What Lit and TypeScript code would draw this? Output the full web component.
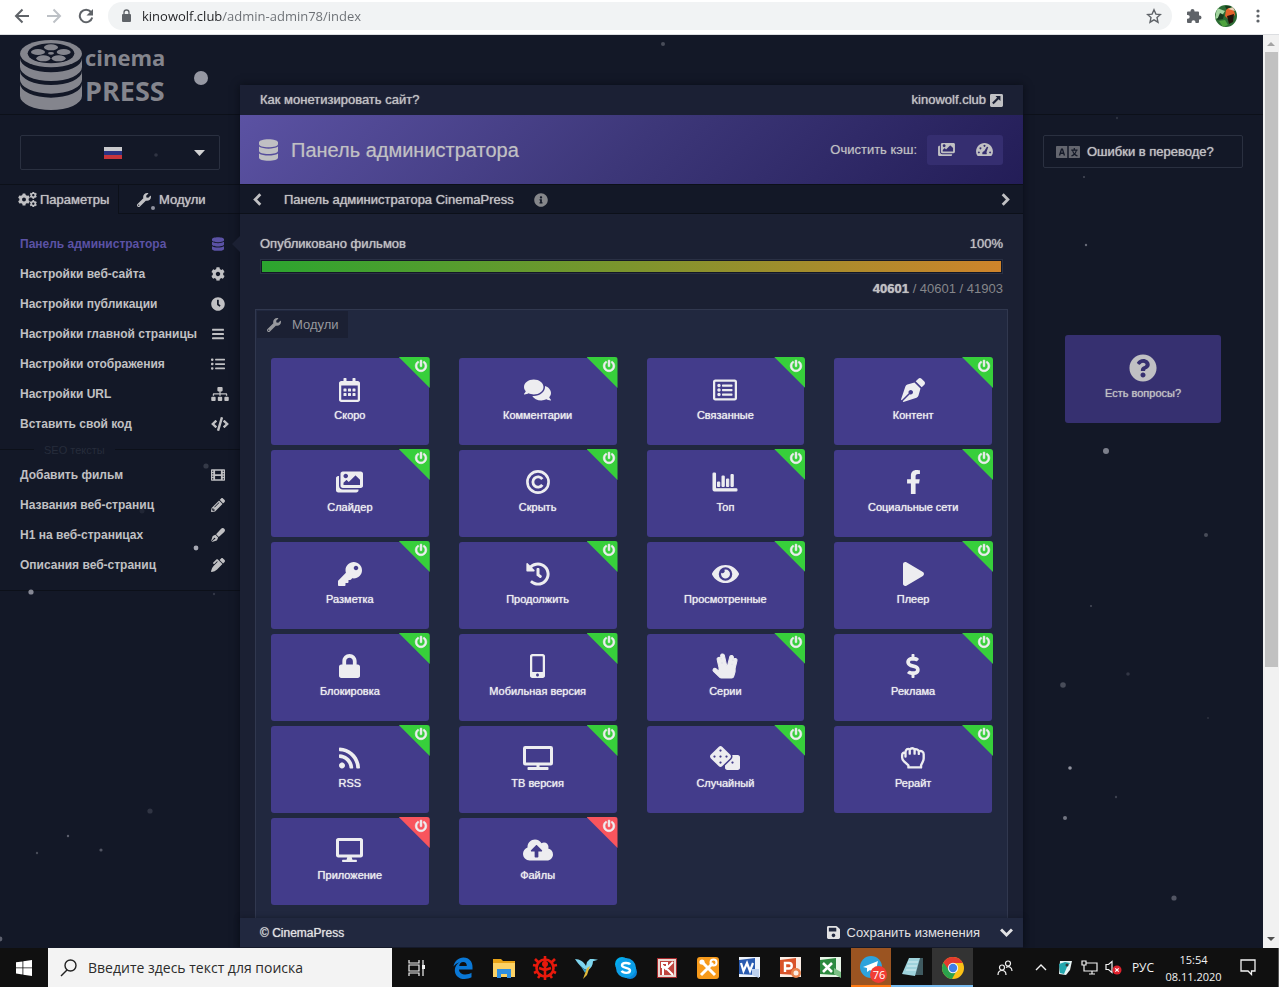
import { LitElement, html, css, svg, nothing } from "lit";
import { customElement, property } from "lit/decorators.js";

const COG =
  "M487.4 315.7l-42.6-24.6c4.3-23.2 4.3-47 0-70.2l42.6-24.6c4.9-2.8 7.1-8.6 5.5-14-11.1-35.6-30-67.8-54.7-94.6-3.8-4.1-10-5.1-14.8-2.3L380.8 110c-17.9-15.4-38.5-27.3-60.8-35.1V25.8c0-5.6-3.9-10.5-9.4-11.7-36.7-8.2-74.3-7.8-109.2 0-5.5 1.2-9.4 6.1-9.4 11.7V75c-22.2 7.9-42.8 19.8-60.8 35.1L88.7 85.5c-4.9-2.8-11-1.9-14.8 2.3-24.7 26.7-43.6 58.9-54.7 94.6-1.7 5.4.6 11.2 5.5 14L67.3 221c-4.3 23.2-4.3 47 0 70.2l-42.6 24.6c-4.9 2.8-7.1 8.6-5.5 14 11.1 35.6 30 67.8 54.7 94.6 3.8 4.1 10 5.1 14.8 2.3l42.6-24.6c17.9 15.4 38.5 27.3 60.8 35.1v49.2c0 5.6 3.9 10.5 9.4 11.7 36.7 8.2 74.3 7.8 109.2 0 5.5-1.2 9.4-6.1 9.4-11.7v-49.2c22.2-7.9 42.8-19.8 60.8-35.1l42.6 24.6c4.9 2.8 11 1.9 14.8-2.3 24.7-26.7 43.6-58.9 54.7-94.6 1.5-5.5-.7-11.3-5.6-14.1zM256 336c-44.1 0-80-35.9-80-80s35.9-80 80-80 80 35.9 80 80-35.9 80-80 80z";

const p = (d: string) => svg`<path fill-rule="evenodd" d=${d}></path>`;
const bold = (d: string) => svg`<path fill-rule="evenodd" stroke="currentColor" stroke-width="22" d=${d}></path>`;

/* name -> [viewBox width, shapes]; every icon is 512 units high */
const ICONS: Record<string, [number, unknown]> = {
  database: [448, p("M448 73.143v45.714C448 159.143 347.667 192 224 192S0 159.143 0 118.857V73.143C0 32.857 100.333 0 224 0s224 32.857 224 73.143zM448 176v102.857C448 319.143 347.667 352 224 352S0 319.143 0 278.857V176c48.125 33.143 136.208 48.572 224 48.572S399.874 209.143 448 176zm0 160v102.857C448 479.143 347.667 512 224 512S0 479.143 0 438.857V336c48.125 33.143 136.208 48.572 224 48.572S399.874 369.143 448 336z")],
  cog: [512, p(COG)],
  cogs: [640, svg`<g transform="translate(-12 44) scale(.83)">${p(COG)}</g><g transform="translate(390 -16) scale(.5)">${p(COG)}</g><g transform="translate(390 272) scale(.5)">${p(COG)}</g>`],
  wrench: [512, p("M507.73 109.1c-2.24-9.03-13.54-12.09-20.12-5.51l-74.36 74.36-67.88-11.31-11.31-67.88 74.36-74.36c6.62-6.62 3.43-17.9-5.66-20.16-47.38-11.74-99.55.91-136.58 37.93-39.64 39.64-50.55 97.1-34.05 147.2L18.74 402.76c-24.99 24.99-24.99 65.51 0 90.5 24.99 24.99 65.51 24.99 90.5 0l213.21-213.21c50.12 16.71 107.47 5.68 147.37-34.22 37.07-37.07 49.7-89.32 37.91-136.73zM64 472c-13.25 0-24-10.75-24-24 0-13.26 10.75-24 24-24s24 10.74 24 24c0 13.25-10.75 24-24 24z")],
  clock: [512, p("M256 8C119 8 8 119 8 256s111 248 248 248 248-111 248-248S393 8 256 8zm88 313l-20 25a16 16 0 0 1-22 3l-67-50a40 40 0 0 1-15-31V112a16 16 0 0 1 16-16h32a16 16 0 0 1 16 16v144l58 43a16 16 0 0 1 2 22z")],
  bars: [448, svg`<rect y="60" width="448" height="72" rx="16"></rect><rect y="220" width="448" height="72" rx="16"></rect><rect y="380" width="448" height="72" rx="16"></rect>`],
  list: [512, svg`<rect y="52" width="90" height="90" rx="30"></rect><rect y="212" width="90" height="90" rx="30"></rect><rect y="372" width="90" height="90" rx="30"></rect><rect x="150" y="64" width="362" height="64" rx="16"></rect><rect x="150" y="224" width="362" height="64" rx="16"></rect><rect x="150" y="384" width="362" height="64" rx="16"></rect>`],
  sitemap: [640, p("M128 352H32c-17.67 0-32 14.33-32 32v96c0 17.67 14.33 32 32 32h96c17.67 0 32-14.33 32-32v-96c0-17.67-14.33-32-32-32zm-24-80h192v48h48v-48h192v48h48v-57.59c0-21.17-17.23-38.41-38.41-38.41H344v-64h40c17.67 0 32-14.33 32-32V32c0-17.67-14.33-32-32-32H256c-17.67 0-32 14.33-32 32v96c0 17.67 14.33 32 32 32h40v64H94.41C73.23 224 56 241.23 56 262.41V320h48v-48zm264 80h-96c-17.67 0-32 14.33-32 32v96c0 17.67 14.33 32 32 32h96c17.67 0 32-14.33 32-32v-96c0-17.67-14.33-32-32-32zm240 0h-96c-17.67 0-32 14.33-32 32v96c0 17.67 14.33 32 32 32h96c17.67 0 32-14.33 32-32v-96c0-17.67-14.33-32-32-32z")],
  code: [640, p("M278.9 511.5l-61-17.7c-6.4-1.8-10-8.5-8.2-14.9L346.2 8.7c1.8-6.4 8.5-10 14.9-8.2l61 17.7c6.4 1.8 10 8.5 8.2 14.9L293.8 503.3c-1.9 6.4-8.5 10.1-14.9 8.2zm-114-112.2l43.5-46.4c4.6-4.9 4.3-12.7-.8-17.2L117 256l90.6-79.7c5.1-4.5 5.5-12.3.8-17.2l-43.5-46.4c-4.5-4.8-12.1-5.1-17-.5L3.8 247.2c-5.1 4.7-5.1 12.8 0 17.5l144.1 135.1c4.9 4.6 12.5 4.4 17-.5zm327.2.6l144.1-135.1c5.1-4.7 5.1-12.8 0-17.5L492.1 112.1c-4.8-4.5-12.4-4.3-17 .5L431.6 159c-4.6 4.9-4.3 12.7.8 17.2L523 256l-90.6 79.7c-5.1 4.5-5.5 12.3-.8 17.2l43.5 46.4c4.5 4.9 12.1 5.1 17 .6z")],
  film: [512, p("M24 48H488a24 24 0 0 1 24 24V440a24 24 0 0 1-24 24H24a24 24 0 0 1-24-24V72A24 24 0 0 1 24 48zM40 96v44h44v-44zM40 188v44h44v-44zM40 280v44h44v-44zM40 372v44h44v-44zM428 96v44h44v-44zM428 188v44h44v-44zM428 280v44h44v-44zM428 372v44h44v-44zM150 100v124h212V100zM150 288v124h212V288z")],
  pencil: [512, p("M497.9 142.1l-46.1 46.1c-4.7 4.7-12.3 4.7-17 0l-111-111c-4.7-4.7-4.7-12.3 0-17l46.1-46.1c18.7-18.7 49.1-18.7 67.9 0l60.1 60.1c18.8 18.7 18.8 49.1 0 67.9zM284.2 99.8L21.6 362.4.4 483.9c-2.9 16.4 11.4 30.6 27.8 27.8l121.5-21.3 262.6-262.6c4.7-4.7 4.7-12.3 0-17l-111-111c-4.8-4.7-12.4-4.7-17.1 0zM124.1 339.9c-5.5-5.5-5.5-14.3 0-19.8l154-154c5.5-5.5 14.3-5.5 19.8 0s5.5 14.3 0 19.8l-154 154c-5.5 5.5-14.3 5.5-19.8 0zM88 424h48v36.3l-64.5 11.3-31.1-31.1L51.7 376H88v48z")],
  penFancy: [512, p("M79.18 282.94a32.005 32.005 0 0 0-20.24 20.24L0 480l4.69 4.69 92.89-92.89c-.66-2.56-1.57-5.03-1.57-7.8 0-17.67 14.33-32 32-32s32 14.33 32 32-14.33 32-32 32c-2.77 0-5.24-.91-7.8-1.57l-92.89 92.89L32 512l176.82-58.94a31.983 31.983 0 0 0 20.24-20.24l33.07-84.07-98.88-98.88-84.07 33.07zM369.25 28.32L186.14 227.81l97.85 97.85 199.49-183.11C568.4 67.48 443.73-55.94 369.25 28.32z")],
  penAlt: [512, p("M497.94 74.17l-60.11-60.11c-18.75-18.75-49.16-18.75-67.91 0l-56.55 56.55 128.02 128.02 56.55-56.55c18.75-18.75 18.75-49.15 0-67.91zm-246.8-20.53c-15.62-15.62-40.94-15.62-56.56 0L75.8 172.43c-6.25 6.25-6.25 16.38 0 22.62l22.63 22.63c6.25 6.25 16.38 6.25 22.63 0l101.82-101.82 22.63 22.62L93.95 290.03A327.038 327.038 0 0 0 .17 485.11l-.03.23c-1.7 15.28 11.21 28.2 26.49 26.51a327.02 327.02 0 0 0 195.34-93.8l196.79-196.79-82.77-82.77-84.85-84.85z")],
  penNib: [512, p("M136.6 138.79a64.003 64.003 0 0 0-43.31 41.35L0 460l14.69 14.69L164.8 324.58c-2.99-6.26-4.8-13.18-4.8-20.58 0-26.51 21.49-48 48-48s48 21.49 48 48-21.49 48-48 48c-7.4 0-14.32-1.81-20.58-4.8L37.31 497.31 52 512l279.86-93.29a64.003 64.003 0 0 0 41.35-43.31L416 224 288 96l-151.4 42.79zm361.34-64.62l-60.11-60.11c-18.75-18.75-49.16-18.75-67.91 0l-56.55 56.55 128.02 128.02 56.55-56.55c18.75-18.75 18.75-49.15 0-67.91z")],
  calendar: [448, p("M148 288h-40c-6.6 0-12-5.4-12-12v-40c0-6.6 5.4-12 12-12h40c6.6 0 12 5.4 12 12v40c0 6.6-5.4 12-12 12zm108-12v-40c0-6.6-5.4-12-12-12h-40c-6.6 0-12 5.4-12 12v40c0 6.6 5.4 12 12 12h40c6.6 0 12-5.4 12-12zm96 0v-40c0-6.6-5.4-12-12-12h-40c-6.6 0-12 5.4-12 12v40c0 6.6 5.4 12 12 12h40c6.6 0 12-5.4 12-12zm-96 96v-40c0-6.6-5.4-12-12-12h-40c-6.6 0-12 5.4-12 12v40c0 6.6 5.4 12 12 12h40c6.6 0 12-5.4 12-12zm-96 0v-40c0-6.6-5.4-12-12-12h-40c-6.6 0-12 5.4-12 12v40c0 6.6 5.4 12 12 12h40c6.6 0 12-5.4 12-12zm192 0v-40c0-6.6-5.4-12-12-12h-40c-6.6 0-12 5.4-12 12v40c0 6.6 5.4 12 12 12h40c6.6 0 12-5.4 12-12zm96-260v352c0 26.5-21.5 48-48 48H48c-26.5 0-48-21.5-48-48V112c0-26.5 21.5-48 48-48h48V12c0-6.6 5.4-12 12-12h40c6.6 0 12 5.4 12 12v52h128V12c0-6.6 5.4-12 12-12h40c6.6 0 12 5.4 12 12v52h48c26.5 0 48 21.5 48 48zm-48 346V160H48v298c0 3.3 2.7 6 6 6h340c3.3 0 6-2.7 6-6z")],
  comments: [576, p("M416 192c0-88.4-93.1-160-208-160S0 103.6 0 192c0 34.3 14.1 65.9 38 92-13.4 30.2-35.5 54.2-35.8 54.5-2.2 2.3-2.8 5.7-1.5 8.7S4.8 352 8 352c36.6 0 66.9-12.3 88.7-25 32.2 15.7 70.3 25 111.3 25 114.9 0 208-71.6 208-160zm122 220c23.9-26 38-57.7 38-92 0-66.9-53.5-124.2-129.3-148.1.9 6.6 1.3 13.3 1.3 20.1 0 105.9-107.7 192-240 192-10.8 0-21.3-.8-31.7-1.9C207.8 439.6 281.8 480 368 480c41 0 79.1-9.2 111.3-25 21.8 12.7 52.1 25 88.7 25 3.2 0 6.1-1.9 7.3-4.8 1.3-2.9.7-6.3-1.5-8.7-.3-.3-22.4-24.2-35.8-54.5z")],
  listAlt: [512, p("M464 32H48C21.49 32 0 53.49 0 80v352c0 26.51 21.49 48 48 48h416c26.51 0 48-21.49 48-48V80c0-26.51-21.49-48-48-48zm-6 400H54a6 6 0 0 1-6-6V86a6 6 0 0 1 6-6h404a6 6 0 0 1 6 6v340a6 6 0 0 1-6 6zm-42-92v24c0 6.627-5.373 12-12 12H204c-6.627 0-12-5.373-12-12v-24c0-6.627 5.373-12 12-12h200c6.627 0 12 5.373 12 12zm0-96v24c0 6.627-5.373 12-12 12H204c-6.627 0-12-5.373-12-12v-24c0-6.627 5.373-12 12-12h200c6.627 0 12 5.373 12 12zm0-96v24c0 6.627-5.373 12-12 12H204c-6.627 0-12-5.373-12-12v-24c0-6.627 5.373-12 12-12h200c6.627 0 12 5.373 12 12zm-252 12c0 19.882-16.118 36-36 36s-36-16.118-36-36 16.118-36 36-36 36 16.118 36 36zm0 96c0 19.882-16.118 36-36 36s-36-16.118-36-36 16.118-36 36-36 36 16.118 36 36zm0 96c0 19.882-16.118 36-36 36s-36-16.118-36-36 16.118-36 36-36 36 16.118 36 36z")],
  images: [576, p("M480 416v16c0 26.51-21.49 48-48 48H48c-26.51 0-48-21.49-48-48V176c0-26.51 21.49-48 48-48h16v208c0 44.112 35.888 80 80 80h336zm96-80V80c0-26.51-21.49-48-48-48H144c-26.51 0-48 21.49-48 48v256c0 26.51 21.49 48 48 48h384c26.51 0 48-21.49 48-48zM256 128c0 26.51-21.49 48-48 48s-48-21.49-48-48 21.49-48 48-48 48 21.49 48 48zm-96 144l55.515-55.515c4.686-4.686 12.284-4.686 16.971 0L272 256l135.515-135.515c4.686-4.686 12.284-4.686 16.971 0L512 208v112H160v-48z")],
  copyright: [512, svg`<circle cx="256" cy="256" r="226" fill="none" stroke="currentColor" stroke-width="56"></circle><path d="M348 318a110 110 0 1 1 0-124" fill="none" stroke="currentColor" stroke-width="60"></path>`],
  chart: [512, bold("M396.8 352h22.4c6.4 0 12.8-6.4 12.8-12.8V108.8c0-6.4-6.4-12.8-12.8-12.8h-22.4c-6.4 0-12.8 6.4-12.8 12.8v230.4c0 6.4 6.4 12.8 12.8 12.8zm-192 0h22.4c6.4 0 12.8-6.4 12.8-12.8V140.8c0-6.4-6.4-12.8-12.8-12.8h-22.4c-6.4 0-12.8 6.4-12.8 12.8v198.4c0 6.4 6.4 12.8 12.8 12.8zm96 0h22.4c6.4 0 12.8-6.4 12.8-12.8V204.8c0-6.4-6.4-12.8-12.8-12.8h-22.4c-6.4 0-12.8 6.4-12.8 12.8v134.4c0 6.4 6.4 12.8 12.8 12.8zM496 400H54V80c0-8.84-7.16-16-16-16H16C7.160 64 0 71.160 0 80v336c0 17.670 14.330 32 32 32h464c8.840 0 16-7.160 16-16v-16c0-8.840-7.160-16-16-16zm-387.2-48h22.4c6.4 0 12.8-6.4 12.8-12.8v-70.4c0-6.4-6.4-12.8-12.8-12.8h-22.4c-6.4 0-12.8 6.4-12.8 12.8v70.4c0 6.4 6.4 12.8 12.8 12.8z")],
  facebook: [320, p("M279.14 288l14.22-92.66h-88.91v-60.13c0-25.35 12.42-50.06 52.24-50.06h40.42V6.26S260.43 0 225.36 0c-73.22 0-121.08 44.38-121.08 124.72v70.62H22.89V288h81.39v224h100.17V288z")],
  key: [512, p("M512 176.001C512 273.203 433.202 352 336 352c-11.22 0-22.19-1.062-32.827-3.069l-24.012 27.014A23.999 23.999 0 0 1 261.223 384H224v40c0 13.255-10.745 24-24 24h-40v40c0 13.255-10.745 24-24 24H24c-13.255 0-24-10.745-24-24v-78.059c0-6.365 2.529-12.47 7.029-16.971l161.802-161.802C163.108 213.814 160 195.271 160 176 160 78.798 238.797.001 335.999 0 433.488-.001 512 78.511 512 176.001zM336 128c0 26.51 21.49 48 48 48s48-21.49 48-48-21.49-48-48-48-48 21.49-48 48z")],
  history: [512, p("M504 255.531c.253 136.64-111.18 248.372-247.82 248.468-59.015.042-113.223-20.53-155.822-54.911-11.077-8.94-11.905-25.541-1.839-35.607l11.267-11.267c8.609-8.609 22.353-9.551 31.891-1.984C173.062 425.135 212.781 440 256 440c101.705 0 184-82.311 184-184 0-101.705-82.311-184-184-184-48.814 0-93.149 18.969-126.068 49.932l50.754 50.754c10.08 10.08 2.941 27.314-11.313 27.314H24c-8.837 0-16-7.163-16-16V38.627c0-14.254 17.234-21.393 27.314-11.314l49.372 49.372C129.209 34.136 189.552 8 256 8c136.81 0 247.747 110.78 248 247.531zm-180.912 78.784l9.823-12.63c8.138-10.463 6.253-25.542-4.21-33.679L288 256.349V152c0-13.255-10.745-24-24-24h-16c-13.255 0-24 10.745-24 24v135.651l65.409 50.874c10.463 8.137 25.541 6.253 33.679-4.21z")],
  eye: [576, p("M572.52 241.4C518.29 135.59 410.93 64 288 64S57.68 135.64 3.48 241.41a32.35 32.35 0 0 0 0 29.19C57.71 376.41 165.07 448 288 448s230.32-71.64 284.52-177.41a32.35 32.35 0 0 0 0-29.19zM288 400a144 144 0 1 1 144-144 143.93 143.93 0 0 1-144 144zm0-240a95.31 95.31 0 0 0-25.31 3.79 47.85 47.85 0 0 1-66.9 66.9A95.78 95.78 0 1 0 288 160z")],
  play: [448, p("M424.4 214.7L72.4 6.6C43.8-10.3 0 6.1 0 47.9V464c0 37.5 40.7 60.1 72.4 41.3l352-208c31.4-18.5 31.5-64.1 0-82.6z")],
  lock: [448, p("M400 224h-24v-72C376 68.2 307.8 0 224 0S72 68.2 72 152v72H48c-26.5 0-48 21.5-48 48v192c0 26.5 21.5 48 48 48h352c26.5 0 48-21.5 48-48V272c0-26.5-21.5-48-48-48zm-104 0H152v-72c0-39.7 32.3-72 72-72s72 32.3 72 72v72z")],
  mobile: [320, p("M272 0H48C21.5 0 0 21.5 0 48v416c0 26.5 21.5 48 48 48h224c26.5 0 48-21.5 48-48V48c0-26.5-21.5-48-48-48zM160 480c-17.7 0-32-14.3-32-32s14.3-32 32-32 32 14.3 32 32-14.3 32-32 32zm112-108c0 6.6-5.4 12-12 12H60c-6.6 0-12-5.4-12-12V60c0-6.6 5.4-12 12-12h200c6.6 0 12 5.4 12 12v312z")],
  spock: [512, bold("M481.3 97.1c-21.5-5.1-43.1 8.2-48.2 29.6L402.3 256h-11.1l43.7-174.3c5.4-21.4-7.7-43.2-29.1-48.5s-43.2 7.7-48.5 29.1L308.8 256h-15.1L242 31.1c-5-21.600-26.400-35-48-30.100-21.500 4.900-35 26.400-30 47.900l47.600 207h-9.800L167 103.100c-4.900-21.500-26.300-35-47.900-30.100-21.500 4.900-35 26.300-30.100 47.900l39 171.600v79.400l-60.600-57c-16.100-15.100-41.400-14.400-56.500 1.700s-14.400 41.400 1.700 56.500L146.300 499c8.900 8.400 20.700 13 32.900 13h216.700c21.300 0 40-14 46-34.400l26.200-88.300c2.600-8.900 4-18 4-27.300v-42c0-7.500.9-15 2.600-22.200L511 145.300C516 123.800 502.800 102.200 481.300 97.100z")],
  dollar: [288, p("M209.2 233.4l-108-31.6C88.7 198.2 80 186.5 80 173.5c0-16.3 13.2-29.5 29.5-29.5h66.3c12.2 0 24.2 3.7 34.2 10.5 6.1 4.1 14.3 3.1 19.5-2l34.8-34c7.1-6.9 6.1-18.4-1.8-24.5C238 74.8 207.4 64.1 176 64V16c0-8.8-7.2-16-16-16h-32c-8.8 0-16 7.2-16 16v48h-2.500C45.8 64-5.400 118.700.5 183.600c4.200 46.100 39.400 83.600 83.800 96.600l102.500 30c12.500 3.700 21.200 15.300 21.200 28.300 0 16.300-13.200 29.500-29.500 29.500h-66.300C100 368 88 364.300 78 357.500c-6.100-4.100-14.300-3.100-19.500 2l-34.800 34c-7.100 6.900-6.100 18.400 1.800 24.500 24.500 19.200 55.100 29.900 86.500 30v48c0 8.800 7.200 16 16 16h32c8.800 0 16-7.200 16-16v-48.200c46.600-.9 90.300-28.600 105.700-72.700 21.500-61.600-14.600-124.800-72.500-141.700z")],
  rss: [448, p("M128.081 415.959c0 35.369-28.672 64.041-64.041 64.041S0 451.328 0 415.959s28.672-64.041 64.041-64.041 64.04 28.673 64.04 64.041zm175.66 47.25c-8.354-154.6-132.185-278.587-286.95-286.95C7.656 175.765 0 183.105 0 192.253v48.069c0 8.415 6.49 15.472 14.887 16.018 111.832 7.284 201.473 96.702 208.772 208.772.547 8.397 7.604 14.887 16.018 14.887h48.069c9.149.001 16.489-7.655 15.995-16.79zm144.249.288C439.596 229.677 251.465 40.445 16.503 32.01 7.473 31.686 0 38.981 0 48.016v48.068c0 8.625 6.835 15.645 15.453 15.999 191.179 7.839 344.627 161.316 352.465 352.465.353 8.618 7.373 15.453 15.999 15.453h48.068c9.034-.001 16.329-7.474 16.005-16.504z")],
  tv: [640, p("M592 0H48A48 48 0 0 0 0 48v320a48 48 0 0 0 48 48h240v32H112a16 16 0 0 0-16 16v32a16 16 0 0 0 16 16h416a16 16 0 0 0 16-16v-32a16 16 0 0 0-16-16H352v-32h240a48 48 0 0 0 48-48V48a48 48 0 0 0-48-48zm-16 352H64V64h512z")],
  desktop: [576, p("M528 0H48C21.5 0 0 21.5 0 48v320c0 26.5 21.5 48 48 48h192l-16 48h-72c-13.3 0-24 10.7-24 24s10.7 24 24 24h272c13.3 0 24-10.7 24-24s-10.7-24-24-24h-72l-16-48h192c26.5 0 48-21.5 48-48V48c0-26.5-21.5-48-48-48zm-16 352H64V64h448v288z")],
  dice: [640, p("M592 192H473.26c12.69 29.59 7.12 65.2-17 89.32L320 417.58V464c0 26.51 21.49 48 48 48h224c26.51 0 48-21.49 48-48V240c0-26.51-21.49-48-48-48zM480 376c-13.25 0-24-10.75-24-24 0-13.26 10.75-24 24-24s24 10.74 24 24c0 13.25-10.75 24-24 24zm-46.37-186.7L258.7 14.37c-19.16-19.16-50.23-19.16-69.39 0L14.37 189.3c-19.16 19.16-19.16 50.23 0 69.39L189.3 433.63c19.16 19.16 50.23 19.16 69.39 0L433.63 258.7c19.16-19.17 19.16-50.24 0-69.4zM96 248c-13.25 0-24-10.75-24-24 0-13.26 10.75-24 24-24s24 10.74 24 24c0 13.25-10.75 24-24 24zm128 128c-13.25 0-24-10.75-24-24 0-13.26 10.75-24 24-24s24 10.74 24 24c0 13.25-10.75 24-24 24zm0-128c-13.25 0-24-10.75-24-24 0-13.26 10.75-24 24-24s24 10.74 24 24c0 13.25-10.75 24-24 24zm0-128c-13.25 0-24-10.75-24-24 0-13.26 10.75-24 24-24s24 10.74 24 24c0 13.25-10.75 24-24 24zm128 128c-13.25 0-24-10.75-24-24 0-13.26 10.75-24 24-24s24 10.74 24 24c0 13.25-10.75 24-24 24z")],
  fist: [512, svg`<path fill="none" stroke="currentColor" stroke-width="50" stroke-linejoin="round" stroke-linecap="round" d="M158 456v-44l-94-84c-26-24-40-50-40-82v-50c0-44 34-64 72-56 0-70 50-96 90-66 30-36 80-36 104 0 40-14 80 4 88 38 60-14 106 6 106 62v86c0 26-8 50-20 74l-36 78v44zM96 146v78M186 86v78M290 86v78M380 122v46"></path>`],
  upload: [640, p("M537.6 226.6c4.1-10.7 6.4-22.4 6.4-34.6 0-53-43-96-96-96-19.7 0-38.1 6-53.3 16.2C367 64.2 315.3 32 256 32c-88.4 0-160 71.6-160 160 0 2.7.1 5.4.2 8.1C40.2 219.8 0 273.2 0 336c0 79.5 64.5 144 144 144h368c70.7 0 128-57.3 128-128 0-61.9-44-113.6-102.4-125.4zM393.4 288H328v112c0 8.8-7.2 16-16 16h-48c-8.8 0-16-7.2-16-16V288h-65.4c-14.3 0-21.4-17.2-11.3-27.3l105.4-105.4c6.2-6.2 16.4-6.2 22.6 0l105.4 105.4c10.1 10.1 2.9 27.3-11.3 27.3z")],
  power: [512, bold("M400 54.1c63 45 104 118.6 104 201.9 0 136.8-110.8 247.7-247.5 248C120 504.3 8.2 393 8 256.4 7.9 173.1 48.9 99.3 111.8 54.2c11.7-8.3 28-4.8 35 7.7L162.6 90c5.9 10.5 3.1 23.8-6.6 31-41.5 30.8-68 79.6-68 134.9-.1 92.3 74.5 168.1 168 168.1 91.6 0 168.6-74.2 168-169.1-.3-51.8-24.7-101.8-68.1-134-9.7-7.2-12.4-20.5-6.5-30.9l15.8-28.1c7-12.4 23.2-16.1 34.8-7.8zM296 264V24c0-13.3-10.7-24-24-24h-32c-13.3 0-24 10.7-24 24v240c0 13.3 10.7 24 24 24h32c13.3 0 24-10.7 24-24z")],
  question: [512, p("M504 256c0 136.997-111.043 248-248 248S8 392.997 8 256C8 119.083 119.043 8 256 8s248 111.083 248 248zM262.655 90c-54.497 0-89.255 22.957-116.549 63.758-3.536 5.286-2.353 12.415 2.715 16.258l34.699 26.31c5.205 3.947 12.621 3.008 16.665-2.122 17.864-22.658 30.113-35.797 57.303-35.797 20.429 0 45.698 13.148 45.698 32.958 0 14.976-12.363 22.667-32.534 33.976C247.128 238.528 216 254.941 216 296v4c0 6.627 5.373 12 12 12h56c6.627 0 12-5.373 12-12v-1.333c0-28.462 83.186-29.647 83.186-106.667 0-58.002-60.165-102-116.531-102zM256 338c-25.365 0-46 20.635-46 46 0 25.364 20.635 46 46 46s46-20.636 46-46c0-25.365-20.635-46-46-46z")],
  info: [512, p("M256 8C119.043 8 8 119.083 8 256c0 136.997 111.043 248 248 248s248-111.003 248-248C504 119.083 392.957 8 256 8zm0 110c23.196 0 42 18.804 42 42s-18.804 42-42 42-42-18.804-42-42 18.804-42 42-42zm56 254c0 6.627-5.373 12-12 12h-88c-6.627 0-12-5.373-12-12v-24c0-6.627 5.373-12 12-12h12v-64h-12c-6.627 0-12-5.373-12-12v-24c0-6.627 5.373-12 12-12h64c6.627 0 12 5.373 12 12v100h12c6.627 0 12 5.373 12 12v24z")],
  save: [448, p("M433.941 129.941l-83.882-83.882A48 48 0 0 0 316.118 32H48C21.49 32 0 53.49 0 80v352c0 26.51 21.49 48 48 48h352c26.51 0 48-21.49 48-48V163.882a48 48 0 0 0-14.059-33.941zM224 416c-35.346 0-64-28.654-64-64 0-35.346 28.654-64 64-64s64 28.654 64 64c0 35.346-28.654 64-64 64zm96-304.52V212c0 6.627-5.373 12-12 12H76c-6.627 0-12-5.373-12-12V108c0-6.627 5.373-12 12-12h228.52c3.183 0 6.235 1.264 8.485 3.515l3.48 3.48A11.996 11.996 0 0 1 320 111.48z")],
  gauge: [576, p("M288 32C129 32 0 161 0 320c0 53 14 102 39 145 6 9 16 15 27 15h444c11 0 21-6 27-15 25-43 39-92 39-145C576 161 447 32 288 32zM288 96a34 34 0 1 1-1 0zM96 320a34 34 0 1 1-1 0zM150 180a34 34 0 1 1-1 0zM480 320a34 34 0 1 1-1 0zM370 158l46 15-62 178c14 18 18 44 6 65H216c-16-54 12-98 60-102z")],
  external: [448, p("M48 32H400a48 48 0 0 1 48 48V432a48 48 0 0 1-48 48H48a48 48 0 0 1-48-48V80A48 48 0 0 1 48 32zM190 104l54 54L72 330l54 54 172-172 62 60V104z")],
  chevronLeft: [320, svg`<path d="M260 70L76 256l184 186" fill="none" stroke="currentColor" stroke-width="100"></path>`],
  chevronRight: [320, svg`<path d="M60 70l184 186L60 442" fill="none" stroke="currentColor" stroke-width="100"></path>`],
  chevronDown: [448, svg`<path d="M36 150l188 190 188-190" fill="none" stroke="currentColor" stroke-width="100"></path>`],
  language: [1024, svg`<path transform="translate(0 -76) scale(1 1.300)" fill-rule="evenodd" d="M32 60h448v392H32a32 32 0 0 1-32-32V92a32 32 0 0 1 32-32zM215 140L120 372h62l18-50h110l18 50h62L295 140zM218 270l37-84 37 84zM544 60h448a32 32 0 0 1 32 32v328a32 32 0 0 1-32 32H544zM755 120v50H650v44h38c14 44 36 78 62 106-30 20-62 34-98 44l16 40c44-12 84-30 120-54 34 24 76 42 120 54l16-40c-36-10-68-24-98-44 26-28 48-62 62-106h32v-44H805v-50zM732 214h108c-12 34-30 58-54 80-24-22-42-46-54-80z"></path>`],
};

const icon = (name: string, size: number) => {
  const [w, shapes] = ICONS[name];
  return svg`<svg class="icon" aria-hidden="true" width=${Math.round((w / 512) * size)} height=${size} viewBox="0 0 ${w} 512" fill="currentColor">${shapes}</svg>`;
};

@customElement("module-card")
class ModuleCard extends LitElement {
  @property() icon = "";
  @property() label = "";
  @property({ type: Boolean }) off = false;

  static styles = css`
    :host { display: block; position: relative; }
    .card {
      display: flex; flex-direction: column; align-items: center; gap: 6px;
      height: 87px; padding-top: 20px; box-sizing: border-box;
      background: #433c8b; border-radius: 3px; color: #ededf0;
      font-size: 11px; line-height: 14px; text-decoration: none; white-space: nowrap;
      text-shadow: 0 0 1px #ededf0;
    }
    .icon { display: block; overflow: visible; }
    .toggle {
      position: absolute; top: -1px; right: -1px; width: 31px; height: 31px;
      display: flex; justify-content: flex-end; padding: 3px 3px 0 0; border: 0;
      background: #37cf3b; color: #ededf0; clip-path: polygon(0 0, 100% 0, 100% 100%);
      border-radius: 0 3px 0 0;
    }
    .toggle.off { background: #f9555d; }
  `;

  render() {
    return html`
      <a class="card" href="#">${icon(this.icon, 24)}<span>${this.label}</span></a>
      <button class="toggle ${this.off ? "off" : ""}" aria-label="Вкл/выкл: ${this.label}">${icon("power", 12)}</button>
    `;
  }
}

const MENU = [
  ["Панель администратора", "database"],
  ["Настройки веб-сайта", "cog"],
  ["Настройки публикации", "clock"],
  ["Настройки главной страницы", "bars"],
  ["Настройки отображения", "list"],
  ["Настройки URL", "sitemap"],
  ["Вставить свой код", "code"],
];
const SEO_MENU = [
  ["Добавить фильм", "film"],
  ["Названия веб-страниц", "pencil"],
  ["H1 на веб-страницах", "penFancy"],
  ["Описания веб-страниц", "penAlt"],
];
const MODULES = [
  ["Скоро", "calendar"], ["Комментарии", "comments"], ["Связанные", "listAlt"], ["Контент", "penNib"],
  ["Слайдер", "images"], ["Скрыть", "copyright"], ["Топ", "chart"], ["Социальные сети", "facebook"],
  ["Разметка", "key"], ["Продолжить", "history"], ["Просмотренные", "eye"], ["Плеер", "play"],
  ["Блокировка", "lock"], ["Мобильная версия", "mobile"], ["Серии", "spock"], ["Реклама", "dollar"],
  ["RSS", "rss"], ["ТВ версия", "tv"], ["Случайный", "dice"], ["Рерайт", "fist"],
  ["Приложение", "desktop", "off"], ["Файлы", "upload", "off"],
];

/* floating particles: x, y, radius, opacity */
const STARS = [
  [201, 43, 7, 0.62], [663, 9, 2, 0.25], [153, 173, 2, 0.6], [196, 513, 2.4, 0.7], [31, 557, 2.6, 0.55],
  [206, 431, 2.6, 0.16], [142, 476, 2.5, 0.07], [214, 559, 1.2, 0.15], [156, 120, 1.8, 0.14], [1084, 142, 1, 0.25],
  [1086, 210, 1.2, 0.4], [1106, 416, 3, 0.5], [1206, 500, 2, 0.25], [1091, 571, 1, 0.25], [1063, 650, 2.8, 0.25],
  [1128, 639, 1.8, 0.15], [1208, 683, 1, 0.12], [1070, 733, 1.8, 0.6], [1116, 762, 1.2, 0.2], [1065, 783, 2, 0.45],
  [1174, 863, 2.6, 0.3], [68, 801, 1.2, 0.35], [101, 815, 1.6, 0.3], [37, 818, 1.2, 0.25], [150, 776, 2.6, 0.14],
  [0, 904, 2.4, 0.35], [1117, 83, 1.2, 0.12],
];

const app = (content: unknown) => svg`<svg width="26" height="26" viewBox="0 0 26 26" aria-hidden="true">${content}</svg>`;
const APPS: { name: string; cls?: string; art: unknown; badge?: string }[] = [
  { name: "Edge", art: app(svg`<path fill="#0a78d6" d="M3.500 11.500C4.500 6 8.500 2.500 13.500 2.500c6 0 9 4.500 9 9.500v2.500H9c.2 3.500 3 5 6.300 5 2.500 0 4.500-.7 6.200-1.700v4.500c-2 1.200-4.500 1.700-7 1.700-6 0-9.700-3.800-9.700-8.800 0-3.700 2-6.500 5-8-3 .8-5 2.300-6.300 4.300zM9.200 11h7.600c0-2.500-1.300-4-3.600-4-2.200 0-3.600 1.500-4 4z"></path>`) },
  { name: "Проводник", art: app(svg`<path fill="#e8a317" d="M2 4h8l2 2h12v16H2z"></path><path fill="#fcd265" d="M2 8h22v14H2z"></path><path fill="#2f8fe0" d="M6 14h14v9h-4v-4h-6v4H6z"></path>`) },
  { name: "Ant", art: app(svg`<g stroke="#e8190c" stroke-width="2.600" fill="none"><circle cx="13" cy="13" r="8.500"></circle><path d="M13 1v24M1 10l5 1M25 10l-5 1M3 4l4 4M23 4l-4 4M2 18l4-2M24 18l-4-2M6 23l3-4M20 23l-3-4M13 15l-6-2M13 15l6-2"></path></g><circle cx="13" cy="9" r="3" fill="#e8190c"></circle>`) },
  { name: "Колибри", art: app(svg`<path fill="#7fd6ef" d="M2 4c5 0 9 3 11 7l1-4 3-3h3l5 .8-5 1.500c0 4-2 7-5 9-5-1-9-5-13-11.300z"></path><path fill="#3aa0c8" d="M6 8c3 4 5 7 8 7l-2 3z"></path><path fill="#e0b93c" d="M14 13l3-2-3 9-4 4z"></path>`) },
  { name: "Skype", art: app(svg`<circle cx="9" cy="9" r="7" fill="#00aff0"></circle><circle cx="17" cy="17" r="7" fill="#0a84d8"></circle><circle cx="13" cy="13" r="10" fill="#0c9fe8"></circle><path d="M17 9.500c-1-2-8-2.300-8 .8 0 3.200 8 1.800 8 5.200 0 3.200-7 3-8.300.3" fill="none" stroke="#fff" stroke-width="2.400"></path>`) },
  { name: "RK", art: app(svg`<path fill="#a5282c" d="M3 3h20v20H3z"></path><path fill="#e9d6d0" d="M4 4h18v18H4z"></path><path fill="#c0453f" d="M6 6h14v14H6z"></path><path d="M8 8h5v4H8zM19 7l-7 7-3-3v9M13 14l6 6" fill="none" stroke="#fff" stroke-width="2"></path>`) },
  { name: "Инструменты", art: app(svg`<rect x="2" y="2" width="22" height="22" rx="3" fill="#f79a1b"></rect><path d="M6 20L18 8M8 8l12 12" stroke="#fff" stroke-width="3"></path><circle cx="18.500" cy="7.500" r="3" fill="none" stroke="#fff" stroke-width="2"></circle><circle cx="7" cy="7" r="2.600" fill="#fff"></circle>`) },
  { name: "Word", art: app(svg`<path fill="#eef3fb" d="M3 2h21v20H3z"></path><path fill="#2a5bb0" d="M3 5l16-2v17L3 19z"></path><path d="M5 8l2.500 8L11 8l3 8 3-8" fill="none" stroke="#fff" stroke-width="2.200"></path><path d="M16 14h7v9l-7-3z" fill="#bcd0ee"></path>`) },
  { name: "PowerPoint", art: app(svg`<path fill="#fbeee6" d="M3 2h21v20H3z"></path><path fill="#d9532a" d="M3 5l16-2v17L3 19z"></path><path d="M8 17V8h4a2.500 2.500 0 0 1 0 5.500H8" fill="none" stroke="#fff" stroke-width="2.400"></path><circle cx="19" cy="18" r="5" fill="#e8834e"></circle><circle cx="19" cy="18" r="2.500" fill="#fbeee6"></circle>`) },
  { name: "Excel", art: app(svg`<path fill="#e9f5e8" d="M3 2h21v20H3z"></path><path fill="#2c8a3f" d="M3 5l16-2v17L3 19z"></path><path d="M6 8l9 9M15 8l-9 9" stroke="#fff" stroke-width="2.600"></path><path d="M17 13l7 4v6l-7-4z" fill="#7cc186"></path>`) },
  { name: "Telegram", cls: "alert", badge: "76", art: app(svg`<circle cx="13" cy="12" r="11" fill="#2ea3dc"></circle><path d="M5 12l15-6-3 13-5-4-3 2v-4z" fill="#fff"></path>`) },
  { name: "Блокнот", cls: "open", art: app(svg`<path fill="#3f5a60" d="M12 3h12v17H12z"></path><path fill="#9fd3dc" d="M10 3h11l-5 18-13-2z"></path><path d="M9 7h10M8 11h10M7 15h10" stroke="#d9f0f3"></path>`) },
  { name: "Chrome", cls: "active", art: app(svg`<circle cx="13" cy="13" r="11" fill="#fbc116"></circle><path fill="#2ba24c" d="M13 13L3.500 7.500A11 11 0 0 0 12 24l5-9z"></path><path fill="#e33b2e" d="M13 8h9.800A11 11 0 0 0 3.500 7.500l5 7z"></path><circle cx="13" cy="13" r="5.200" fill="#f4f4f4"></circle><circle cx="13" cy="13" r="4.200" fill="#3f7fe8"></circle>`) },
];

@customElement("app-root")
class AppRoot extends LitElement {
  static styles = css`
    :host {
      display: flex; flex-direction: column; height: 100vh; overflow: hidden;
      font-family: "Liberation Sans", Arial, sans-serif; font-size: 13px; line-height: 16px; color: #c0c0c3;
    }
    * { box-sizing: border-box; }
    button, input, select { font: inherit; color: inherit; margin: 0; padding: 0; border: 0; background: none; }
    a { color: inherit; text-decoration: none; }
    ul { list-style: none; margin: 0; padding: 0; }
    h1 { margin: 0; font-size: 20px; font-weight: 400; line-height: 24px; }
    svg { display: block; flex: none; }

    .browser {
      flex: none; display: flex; align-items: center; height: 35px; padding: 0 5px 2px 6px;
      background: #fff; border-bottom: 1px solid #dcdee1; color: #5f6368;
    }
    .browser button { width: 32px; height: 28px; display: grid; place-items: center; }
    .address {
      flex: 1; display: flex; align-items: center; height: 28px; margin: 0 6px;
      padding: 0 2px 0 12px; border-radius: 14px; background: #f1f3f4;
    }
    .url {
      flex: 1; margin-left: 10px; outline: 0; height: 20px;
      font: 13px/20px "Open Sans", "Noto Sans", sans-serif;
      background: linear-gradient(90deg, #202124 80px, #6a6e73 80px);
      background-clip: text; -webkit-background-clip: text; -webkit-text-fill-color: transparent;
    }
    .avatar { border-radius: 50%; }

    .viewport { flex: 1; min-height: 0; display: flex; background: #131827; }
    .page {
      flex: 1; min-width: 0; position: relative; overflow: hidden;
      display: grid; grid-template-columns: 240px 1fr 240px;
      text-shadow: 0 0 1px #c0c0c3;
    }
    .stars { position: absolute; top: 0; left: 0; fill: #e6e6f0; pointer-events: none; }
    .scrollbar {
      flex: none; width: 16px; display: flex; flex-direction: column; align-items: center; background: #f1f1f1;
    }
    .scrollbar svg { margin: 5px 0; }
    .track { flex: 1; width: 13px; }
    .thumb { height: 70%; background: #c1c1c1; }

    .logo { display: flex; gap: 3px; height: 80px; padding: 5px 20px 0; border-bottom: 1px solid #0c1019; color: #84858d; }
    .wordmark {
      display: flex; flex-direction: column; font: 700 27px/34px "Open Sans", sans-serif; text-shadow: none;
    }
    .wordmark .small-caps { font-size: 22px; }
    .language { display: grid; align-items: center; padding: 20px 20px 14px; height: 69px; }
    .language > * { grid-area: 1 / 1; }
    .language select { width: 100%; height: 35px; border: 1px solid #2a3040; border-radius: 2px; appearance: none; }
    .flag { justify-self: center; margin-right: 14px; pointer-events: none; }
    .caret { justify-self: end; margin-right: 15px; pointer-events: none; }
    .tabs { display: flex; height: 30px; border-top: 1px solid #0c1019; }
    .tab { display: flex; align-items: center; gap: 3px; width: 118px; padding-left: 18px; }
    .tab.other { flex: 1; gap: 8px; border-left: 1px solid #0c1019; box-shadow: inset 0 -1px #0c1019; }
    .menu { padding: 15px 0 10px; border-bottom: 1px solid #0c1019; font-size: 12px; font-weight: 700; text-shadow: none; }
    .item { display: flex; align-items: center; height: 30px; padding-left: 20px; position: relative; }
    .name { flex: 1; white-space: nowrap; }
    .slot { width: 29px; display: flex; }
    .slot .box { min-width: 14px; display: flex; justify-content: center; }
    .current { color: #5b52a5; }
    .current::after {
      content: ""; position: absolute; z-index: 1; right: 0; top: 7px; width: 8px; height: 16px;
      background: #1b2033; clip-path: polygon(0 50%, 100% 0, 100% 100%);
    }
    .divider { display: flex; align-items: center; gap: 10px; height: 21px; font-size: 11px; font-weight: 400; color: #262c3b; }
    .divider::before, .divider::after { content: ""; height: 1px; width: 34px; background: #0c1019; }
    .divider::after { flex: 1; }

    .main {
      margin-top: 50px; min-width: 0; min-height: 0; height: calc(100% - 50px); display: flex; flex-direction: column;
      background: #1b2033; box-shadow: 0 0 8px rgba(5, 8, 16, 0.7); position: relative;
    }
    .row { flex: none; display: flex; align-items: center; justify-content: space-between; }
    .top { height: 30px; padding: 0 20px; background: #1b2034; }
    .top a { display: flex; align-items: center; gap: 4px; }
    .hero { height: 69px; padding: 0 20px 0 19px; background: linear-gradient(135deg, #5b52a3, #3d3779 50%, #231d57); text-shadow: 0 0 1px rgba(192, 192, 195, 0.5); }
    .hero .title { display: flex; align-items: center; gap: 13px; }
    .cache { display: flex; align-items: center; gap: 10px; }
    .group { display: flex; background: #352e70; border-radius: 3px; }
    .group button { width: 38px; height: 30px; display: grid; place-items: center; }
    .crumbs { height: 30px; padding: 0 11px; background: #131827; border-top: 1px solid #0c1019; border-bottom: 1px solid #0c1019; }
    .crumbs button { width: 13px; display: grid; place-items: center; }
    .crumbs .here { flex: 1; display: flex; align-items: center; gap: 20px; margin-left: 20px; padding-top: 1px; }
    .muted { color: #85868a; text-shadow: none; }

    .content { flex: 1; min-height: 0; overflow: hidden; padding: 22px 15px 0; }
    .progress { padding: 0 5px; }
    .bar { height: 15px; margin: 7px 0; padding: 1px; border: 1px solid #2a3044; background: #131827; }
    .fill { height: 100%; background: linear-gradient(90deg, #2ba52f, #cf842b); }
    .counts { text-align: right; }
    .panel { margin-top: 12px; height: 100%; border: 1px solid #31384f; background: #21283f; }
    .legend {
      display: flex; width: max-content; align-items: center; gap: 11px; height: 27px; margin: 1px; padding: 0 9px 0 10px;
      background: #1b2033; color: #97989d; text-shadow: none;
    }
    .cards { display: grid; grid-template-columns: repeat(4, 1fr); gap: 5px 30px; padding: 19px 15px; }
    .footer {
      height: 30px; padding: 0 10px 0 20px; background: #21283f; color: #e2e2e4;
      box-shadow: 0 0 5px rgba(10, 13, 24, 0.5); border-bottom: 1px solid #151a2b;
    }
    .brand { font-size: 12px; }
    .footer div { display: flex; gap: 20px; }
    .footer button { display: flex; align-items: center; gap: 7px; }

    .aside { padding-top: 80px; display: flex; flex-direction: column; align-items: center; position: relative; }
    .aside::before { content: ""; position: absolute; left: 0; right: 0; top: 79px; height: 1px; background: #0c1019; }
    .translate {
      width: 200px; height: 33px; margin-top: 20px; display: flex; align-items: center; gap: 7px;
      padding-left: 12px; border: 1px solid #2a3040; border-radius: 2px;
    }
    .translate .icon { color: #64666f; }
    .ask {
      width: 156px; height: 88px; margin-top: 167px; padding-top: 19px; display: flex; flex-direction: column;
      align-items: center; gap: 4px; background: #363070; border-radius: 3px; font-size: 11px; line-height: 14px;
    }

    .taskbar {
      flex: none; display: flex; height: 39px; background: #101010; color: #f2f2f2;
      font-family: "Open Sans", "Noto Sans", sans-serif;
    }
    .taskbar button { display: grid; place-items: center; position: relative; }
    .start { width: 48px; }
    .search { width: 344px; display: flex; align-items: center; gap: 11px; padding-left: 12px; background: #f3f3f3; color: #222; }
    .search input { flex: 1; min-width: 0; height: 100%; font-size: 14px; outline: 0; }
    .search input::placeholder { color: #2b2b2b; opacity: 1; }
    .view { width: 51px; padding-right: 3px; }
    .apps { width: 530px; display: grid; grid-template-columns: repeat(13, 1fr); }
    .alert { background: #9b5421; box-shadow: inset 0 -2px #ff7a12; }
    .open { box-shadow: inset 0 -2px #76b9ed; }
    .active { background: #333; box-shadow: inset 0 -2px #76b9ed; }
    .badge {
      position: absolute; right: 4px; bottom: 4px; width: 17px; height: 17px; border-radius: 50%;
      background: #f23c34; color: #fff; font-size: 11px; line-height: 17px; text-align: center;
    }
    .tray { margin-left: auto; display: flex; padding-right: 9px; border-right: 1px solid #555; }
    .people { width: 48px; }
    .small { width: 24px; }
    .lang { width: 36px; font-size: 12px; }
    .clock { width: 65px; font-size: 11px; line-height: 17px; display: flex; flex-direction: column; align-items: center; justify-content: center; }
    .notices { width: 43px; }
  `;

  private menuItem([label, name]: string[], current = false) {
    return html`<li>
      <a class="item ${current ? "current" : ""}" href="#" aria-current=${current ? "page" : nothing}>
        <span class="name">${label}</span><span class="slot"><span class="box">${icon(name, 14)}</span></span>
      </a>
    </li>`;
  }

  private browserBar() {
    return html`<header class="browser">
      <button aria-label="Назад"><svg width="16" height="16" viewBox="0 0 16 16" fill="none" stroke="#5f6368" stroke-width="2"><path d="M15 8H2M8.500 1.500L2 8l6.500 6.500"></path></svg></button>
      <button aria-label="Вперёд"><svg width="16" height="16" viewBox="0 0 16 16" fill="none" stroke="#bdc1c6" stroke-width="2"><path d="M1 8h13M7.500 1.500L14 8l-6.500 6.500"></path></svg></button>
      <button aria-label="Обновить"><svg width="16" height="16" viewBox="0 0 16 16"><path d="M13 4A6.300 6.300 0 1 0 14.200 9.500" fill="none" stroke="#5f6368" stroke-width="2"></path><path d="M15 1v6.500H8.500z" fill="#5f6368"></path></svg></button>
      <div class="address">
        <svg width="12" height="14" viewBox="0 0 12 14"><rect x="2" y="5" width="9" height="8" rx="1" fill="#5f6368"></rect><path d="M4 5V3.500a2.500 2.500 0 0 1 5 0V5" fill="none" stroke="#5f6368" stroke-width="1.300"></path></svg>
        <input class="url" aria-label="Адресная строка" .value=${"kinowolf.club/admin-admin78/index"} />
        <button aria-label="Добавить в закладки"><svg width="16" height="16" viewBox="0 0 16 16" fill="none" stroke="#5f6368" stroke-width="1.400"><path d="M8 1.800l1.900 4.300 4.600.4-3.500 3.100 1 4.600L8 11.800l-4 2.400 1-4.600L1.500 6.500l4.600-.4z"></path></svg></button>
      </div>
      <button aria-label="Расширения"><svg width="16" height="16" viewBox="0 0 16 16"><path fill="#5f6368" d="M4.500 3.500V3a2 2 0 0 1 4 0v.5H12a1 1 0 0 1 1 1V7.500h.5a2 2 0 0 1 0 4H13V14a1 1 0 0 1-1 1H9.500v-.7a2 2 0 0 0-4 0V15H2a1 1 0 0 1-1-1v-3.300h.8a1.900 1.900 0 0 0 0-3.800H1V4.500a1 1 0 0 1 1-1z"></path></svg></button>
      <button aria-label="Профиль"><svg class="avatar" width="22" height="22" viewBox="0 0 22 22"><rect width="22" height="22" fill="#2c6b34"></rect><path d="M2 3l8 3-4 6-6 2z" fill="#a4d6a0"></path><path d="M5 8l4 2-1 4-6 1zM10 1h6l-4 5z" fill="#173a1e"></path><path d="M11 5c4-5 9 0 9 5l-6 5-4-4z" fill="#e5622a"></path><path d="M13 4l5-2 2 4z" fill="#e9cdb4"></path><path d="M12 11l7-2-1 8-4 2z" fill="#21130c"></path><path d="M4 16l6-1 3 5-5 2z" fill="#4ea33e"></path></svg></button>
      <button aria-label="Меню"><svg width="4" height="14" viewBox="0 0 4 14" fill="#5f6368"><circle cx="2" cy="2" r="1.600"></circle><circle cx="2" cy="7" r="1.600"></circle><circle cx="2" cy="12" r="1.600"></circle></svg></button>
    </header>`;
  }

  private sidebar() {
    const disc = (y: number, h: number) => svg`<path d="M60 ${y}A93 42 0 0 0 246 ${y}V${y + h}A93 42 0 0 1 60 ${y + h}z"></path>`;
    return html`<nav class="sidebar">
      <a class="logo" href="#">
        <svg width="62" height="70" viewBox="60 120 186 210" fill="currentColor" aria-hidden="true">
          <ellipse cx="153" cy="161" rx="93" ry="41"></ellipse>
          <ellipse cx="153" cy="160" rx="70" ry="30" fill="#131827"></ellipse>
          <ellipse cx="153" cy="142" rx="21" ry="9"></ellipse><ellipse cx="114" cy="156" rx="21" ry="9"></ellipse>
          <ellipse cx="191" cy="156" rx="21" ry="9"></ellipse><ellipse cx="130" cy="175" rx="21" ry="9"></ellipse>
          <ellipse cx="176" cy="175" rx="21" ry="9"></ellipse><ellipse cx="153" cy="160" rx="9" ry="4"></ellipse>
          ${disc(175, 26)}${disc(213, 26)}${disc(251, 37)}
        </svg>
        <span class="wordmark"><span class="small-caps">cinema</span><span>PRESS</span></span>
      </a>
      <div class="language">
        <select aria-label="Язык"><option value="ru" aria-label="Русский"></option></select>
        <svg class="flag" width="18" height="12" viewBox="0 0 18 12"><path fill="#c9c9cc" d="M0 0h18v4H0z"></path><path fill="#2b3382" d="M0 4h18v4H0z"></path><path fill="#c9353b" d="M0 8h18v4H0z"></path></svg>
        <svg class="caret" width="11" height="6" viewBox="0 0 11 6" fill="#d2d2d4"><path d="M0 0h11L5.500 6z"></path></svg>
      </div>
      <div class="tabs">
        <a class="tab" href="#">${icon("cogs", 15)}<span>Параметры</span></a>
        <a class="tab other" href="#">${icon("wrench", 14)}<span>Модули</span></a>
      </div>
      <div class="menu">
        <ul>${MENU.map((m, i) => this.menuItem(m, i === 0))}</ul>
        <div class="divider"><span>SEO тексты</span></div>
        <ul>${SEO_MENU.map((m) => this.menuItem(m))}</ul>
      </div>
    </nav>`;
  }

  private mainColumn() {
    return html`<main class="main">
      <div class="row top">
        <a href="#">Как монетизировать сайт?</a>
        <a href="#">kinowolf.club ${icon("external", 15)}</a>
      </div>
      <div class="row hero">
        <div class="title">${icon("database", 22)}<h1>Панель администратора</h1></div>
        <div class="cache">
          <span>Очистить кэш:</span>
          <div class="group">
            <button aria-label="Кэш изображений">${icon("images", 15)}</button>
            <button aria-label="Кэш страниц">${icon("gauge", 15)}</button>
          </div>
        </div>
      </div>
      <div class="row crumbs">
        <button aria-label="Предыдущая">${icon("chevronLeft", 15)}</button>
        <div class="here"><span>Панель администратора CinemaPress</span><span class="muted">${icon("info", 14)}</span></div>
        <button aria-label="Следующая">${icon("chevronRight", 15)}</button>
      </div>
      <div class="content">
        <div class="progress">
          <div class="row"><span>Опубликовано фильмов</span><span>100%</span></div>
          <div class="bar" role="progressbar" aria-label="Опубликовано фильмов" aria-valuenow="100"><div class="fill" style="width: 100%"></div></div>
          <div class="counts"><b>40601</b><span class="muted"> / 40601 / 41903</span></div>
        </div>
        <section class="panel">
          <div class="legend">${icon("wrench", 14)}<span>Модули</span></div>
          <div class="cards">
            ${MODULES.map(([label, name, off]) => html`<module-card .label=${label} .icon=${name} ?off=${!!off}></module-card>`)}
          </div>
        </section>
      </div>
      <footer class="row footer">
        <span class="brand">© CinemaPress</span>
        <div>
          <button>${icon("save", 15)}<span>Сохранить изменения</span></button>
          <button aria-label="Ещё">${icon("chevronDown", 15)}</button>
        </div>
      </footer>
    </main>`;
  }

  private taskbar() {
    return html`<footer class="taskbar">
      <button class="start" aria-label="Пуск"><svg width="16" height="16" viewBox="0 0 16 16" fill="#fff"><path d="M0 2.300l6.500-.9v6.100H0zM7.300 1.300L16 0v7.500H7.300zM0 8.300h6.500v6.200L0 13.600zM7.300 8.300H16V16l-8.700-1.200z"></path></svg></button>
      <label class="search">
        <svg width="17" height="18" viewBox="0 0 17 18" fill="none" stroke="#222" stroke-width="1.400"><circle cx="10.500" cy="6.500" r="5.500"></circle><path d="M7 11L1 17"></path></svg>
        <input aria-label="Поиск" placeholder="Введите здесь текст для поиска" />
      </label>
      <button class="view" aria-label="Представление задач"><svg width="17" height="18" viewBox="0 0 17 18" fill="none" stroke="#f2f2f2" stroke-width="1.200"><path d="M1 1v3h10V1M1 17v-3h10v3M1 6h10v6H1zM15 1v16"></path><path d="M14 6h3v4h-3z" fill="#f2f2f2" stroke="none"></path></svg></button>
      <div class="apps">
        ${APPS.map((a) => html`<button class=${a.cls ?? ""} aria-label=${a.name}>${a.art}${a.badge ? html`<span class="badge">${a.badge}</span>` : nothing}</button>`)}
      </div>
      <div class="tray">
        <button class="people" aria-label="Люди"><svg width="16" height="16" viewBox="0 0 16 16" fill="none" stroke="#f2f2f2" stroke-width="1.200"><circle cx="5" cy="7.500" r="2.500"></circle><path d="M1 15c0-6 8-6 8 0"></path><circle cx="11" cy="3.500" r="2.500"></circle><path d="M9 7.500c3-2 6 0 6 3.500"></path></svg></button>
        <button class="small" aria-label="Скрытые значки"><svg width="12" height="7" viewBox="0 0 12 7" fill="none" stroke="#f2f2f2" stroke-width="1.400"><path d="M1 6l5-5 5 5"></path></svg></button>
        <button class="small" aria-label="Программа"><svg width="16" height="16" viewBox="0 0 16 16"><path fill="#e9f4f4" d="M3 1h12l-2 9-4 5-7-1z"></path><path fill="#23a7ae" d="M2 4l6-2 5 1-3 4-3 7-4-1z"></path><circle cx="10" cy="5" r="1.500" fill="#333"></circle></svg></button>
        <button class="small" aria-label="Сеть"><svg width="17" height="15" viewBox="0 0 17 15" fill="none" stroke="#f2f2f2" stroke-width="1.200"><path d="M5 3h11v8H5M8 14h6M11 11v3M1 1h4v4H1zM3 5v6h2"></path></svg></button>
        <button class="small" aria-label="Звук"><svg width="17" height="15" viewBox="0 0 17 15"><path d="M1 4.500h2.500L7 1.500v11l-3.500-3H1z" fill="none" stroke="#f2f2f2" stroke-width="1.200"></path><circle cx="12" cy="10" r="4.500" fill="#e0222e"></circle><path d="M10.300 8.300l3.400 3.400M13.700 8.300l-3.400 3.400" stroke="#fff" stroke-width="1.200"></path></svg></button>
        <button class="lang">РУС</button>
        <div class="clock"><span>15:54</span><span>08.11.2020</span></div>
        <button class="notices" aria-label="Уведомления"><svg width="16" height="17" viewBox="0 0 16 17" fill="none" stroke="#f2f2f2" stroke-width="1.300"><path d="M1 1h14v11h-3.500v3.500L8 12H1z"></path></svg></button>
      </div>
    </footer>`;
  }

  render() {
    return html`
      ${this.browserBar()}
      <div class="viewport">
        <div class="page">
          ${this.sidebar()} ${this.mainColumn()}
          <aside class="aside">
            <a class="translate" href="#">${icon("language", 12)}<span>Ошибки в переводе?</span></a>
            <a class="ask" href="#">${icon("question", 28)}<span>Есть вопросы?</span></a>
          </aside>
          <svg class="stars" width="1263" height="913" aria-hidden="true">
            ${STARS.map(([x, y, r, o]) => svg`<circle cx=${x} cy=${y} r=${r} opacity=${o}></circle>`)}
          </svg>
        </div>
        <div class="scrollbar" aria-hidden="true">
          <svg width="8" height="7" viewBox="0 0 8 7" fill="#a3a3a3"><path d="M0 6h8L4 2z"></path></svg>
          <div class="track"><div class="thumb"></div></div>
          <svg width="8" height="7" viewBox="0 0 8 7" fill="#505050"><path d="M0 1h8L4 5z"></path></svg>
        </div>
      </div>
      ${this.taskbar()}
    `;
  }
}
